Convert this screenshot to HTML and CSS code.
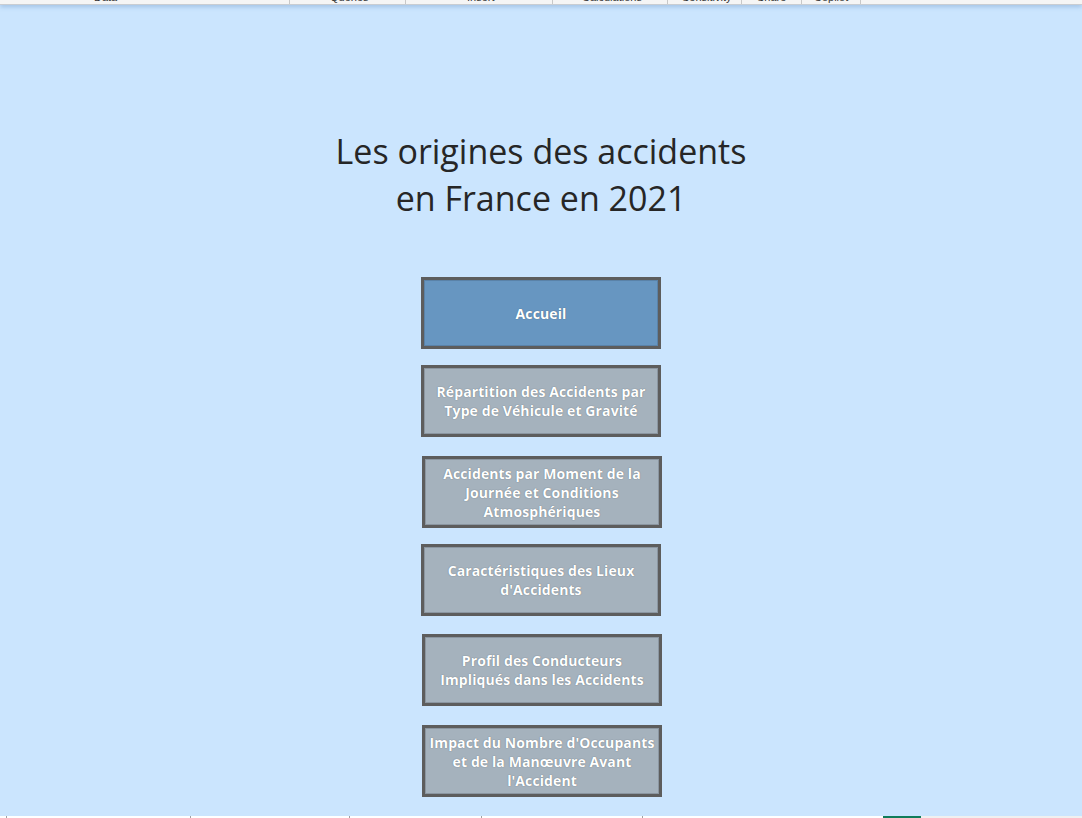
FILE: index.html
```html
<!DOCTYPE html>
<html lang="fr">
<head>
<meta charset="utf-8">
<title>Les origines des accidents en France en 2021</title>
<link rel="stylesheet" href="styles.css">
</head>
<body>
<div class="ribbon">
  <span class="tab t1">Data</span>
  <span class="sep s1"></span>
  <span class="tab t2">Queries</span>
  <span class="sep s2"></span>
  <span class="tab t3">Insert</span>
  <span class="sep s3"></span>
  <span class="tab t4">Calculations</span>
  <span class="sep s4"></span>
  <span class="tab t5">Sensitivity</span>
  <span class="sep s5"></span>
  <span class="tab t6">Share</span>
  <span class="sep s6"></span>
  <span class="tab t7">Copilot</span>
  <span class="sep s7"></span>
</div>
<main class="sheet">
  <h1 class="title">Les origines des accidents<br>en France en 2021</h1>
  <nav class="menu">
    <a class="btn btn-active">Accueil</a>
    <a class="btn">Répartition des Accidents par<br>Type de Véhicule et Gravité</a>
    <a class="btn btn-shift">Accidents par Moment de la<br>Journée et Conditions<br>Atmosphériques</a>
    <a class="btn">Caractéristiques des Lieux<br>d'Accidents</a>
    <a class="btn btn-shift">Profil des Conducteurs<br>Impliqués dans les Accidents</a>
    <a class="btn btn-shift">Impact du Nombre d'Occupants<br>et de la Manœuvre Avant<br>l'Accident</a>
  </nav>
</main>
<footer class="tabs">
  <span class="tick k1"></span>
  <span class="tick k2"></span>
  <span class="tick k3"></span>
  <span class="tick k4"></span>
  <span class="tick k5"></span>
  <span class="green"></span>
  <span class="rest"></span>
</footer>
</body>
</html>
```
FILE: styles.css
```css
html, body {
  margin: 0;
  padding: 0;
}
body {
  width: 1082px;
  height: 818px;
  overflow: hidden;
  background: #cbe5fe;
  font-family: "Open Sans", "Noto Sans", "DejaVu Sans", sans-serif;
  display: flex;
  flex-direction: column;
}
.ribbon {
  position: relative;
  height: 4px;
  flex: none;
  background: #f5f5f5;
  border-bottom: 1px solid #c9cdd2;
  overflow: hidden;
  box-shadow: 0 2px 4px rgba(90, 130, 180, 0.35);
  z-index: 2;
}
.tab {
  position: absolute;
  top: -9px;
  font-family: "Liberation Sans", sans-serif;
  font-size: 11px;
  line-height: 12px;
  color: #333;
}
.t1 { left: 94px; }
.t2 { left: 330px; }
.t3 { left: 467px; }
.t4 { left: 582px; }
.t5 { left: 682px; }
.t6 { left: 757px; }
.t7 { left: 814px; }
.sep {
  position: absolute;
  top: 0;
  width: 1px;
  height: 4px;
  background: #c8c8c8;
}
.s1 { left: 289px; }
.s2 { left: 405px; }
.s3 { left: 552px; }
.s4 { left: 667px; }
.s5 { left: 741px; }
.s6 { left: 801px; }
.s7 { left: 860px; }
.sheet {
  flex: 1;
  display: flex;
  flex-direction: column;
  align-items: center;
  padding-top: 123px;
  box-sizing: border-box;
}
.title {
  margin: 0;
  font-family: "Open Sans", "Noto Sans", sans-serif;
  font-weight: 400;
  font-size: 34px;
  line-height: 47px;
  color: #262626;
  text-align: center;
}
.menu {
  margin-top: 55px;
  display: flex;
  flex-direction: column;
  align-items: center;
  gap: 16px;
}
.btn {
  box-sizing: border-box;
  width: 240px;
  height: 72px;
  border: 3px solid #5d5d5d;
  box-shadow: inset 0 0 0 1px #8b96a1;
  background: #a5b2bd;
  color: #fff;
  display: flex;
  align-items: center;
  justify-content: center;
  text-align: center;
  font-family: "Open Sans", "Noto Sans", sans-serif;
  font-weight: 700;
  font-size: 14px;
  line-height: 19px;
  letter-spacing: 0.1px;
  text-shadow: 0 0 1px rgba(50, 60, 70, 0.7);
}
.btn-active {
  background: #6796c1;
  box-shadow: inset 0 0 0 1px #5a82a8;
}
.btn-shift {
  transform: translateX(1px);
}
.menu .btn:nth-child(3),
.menu .btn:nth-child(6) {
  margin-top: 3px;
}
.menu .btn:nth-child(5) {
  margin-top: 2px;
}
.tabs {
  position: relative;
  flex: none;
  height: 2px;
  background: #ffffff;
}
.tick {
  position: absolute;
  top: 0;
  width: 1px;
  height: 2px;
  background: #a0a0a0;
}
.k1 { left: 6px; }
.k2 { left: 190px; }
.k3 { left: 349px; }
.k4 { left: 481px; }
.k5 { left: 642px; }
.green {
  position: absolute;
  left: 883px;
  width: 38px;
  top: 0;
  height: 2px;
  background: #107c5a;
}
.rest {
  position: absolute;
  left: 921px;
  right: 0;
  top: 0;
  height: 2px;
  background: #f0f0f0;
}
```
